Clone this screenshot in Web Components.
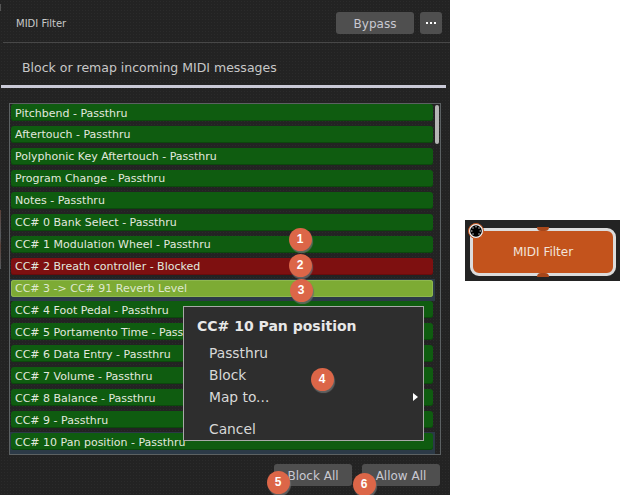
<!DOCTYPE html>
<html><head><meta charset="utf-8">
<style>
html,body{margin:0;padding:0;background:#fff;width:625px;height:495px;overflow:hidden;font-family:"DejaVu Sans",sans-serif}
body{display:flex}
</style></head><body>
<midi-panel></midi-panel>
<midi-node>MIDI Filter</midi-node>
<script>
const TEX="background-color:#232323;background-image:radial-gradient(rgba(255,255,255,.035) 1px,transparent 1px);background-size:3px 3px;";
class El extends HTMLElement{
  constructor(){super();this.attachShadow({mode:'open'}).innerHTML=this.html();}
}
customElements.define('midi-btn',class extends El{html(){return `<style>
:host{display:flex;align-items:center;justify-content:center;height:22px;width:78px;padding-top:1px;background:#4f4f4f;border-radius:3px;color:#c9c9d2;font:12px "DejaVu Sans",sans-serif;box-sizing:border-box}
</style><slot></slot>`}});
customElements.define('midi-row',class extends El{html(){return `<style>
:host{display:flex;align-items:center;box-sizing:border-box;height:17px;margin:0 0 0 1px;padding:1px 0 0 4px;background:#0f5c10;border-radius:3px;box-shadow:inset 0 -1px 0 #0b480c;color:#e2e8df;font:11px "DejaVu Sans",sans-serif;white-space:nowrap;position:relative}
:host([state=blocked]){background:#7e1010;box-shadow:inset 0 -1px 0 #6a0c0c}
:host([state=mapped]){background:#7dab34;box-shadow:inset 0 0 0 1px #8eb84e;color:#dfe8d0}
:host([sel])::before{content:"";position:absolute;z-index:-1;left:-1px;right:-2px;top:-1px;height:22px;background:#2c3a47}
</style><slot></slot>`}});
customElements.define('midi-badge',class extends El{html(){return `<style>
:host{position:absolute;width:23px;height:23px;margin:-11.5px 0 0 -11.5px;border-radius:50%;background:#dc6648;box-shadow:1px 2px 1px rgba(110,110,110,.8);color:#fff;font:bold 12px "Liberation Sans",sans-serif;display:flex;align-items:center;justify-content:center;z-index:5}
</style><slot></slot>`}});
customElements.define('midi-menu',class extends El{html(){return `<style>
:host{position:absolute;left:183px;top:306px;width:241px;height:135px;box-sizing:border-box;border:1px solid #a9a9a9;background:#2e2e2e;color:#d8d8d8;font:13.8px "DejaVu Sans",sans-serif;display:flex;flex-direction:column;z-index:3}
.t{font-weight:bold;font-size:14px;margin:11px 0 0 13px;line-height:16px;color:#e8e8e8}
.i{height:22px;line-height:22px;padding-left:25px;position:relative}
.l{margin-top:8px}
.a{position:absolute;right:5px;top:7px;width:0;height:0;border-left:5px solid #fff;border-top:4px solid transparent;border-bottom:4px solid transparent}
hr{border:0;height:1px;background:#777;margin:4px 4px 6px 4px}
</style><div class="t">CC# 10 Pan position</div><div class="l"></div><div class="i">Passthru</div><div class="i">Block</div><div class="i">Map to...<span class="a"></span></div><hr><div class="i">Cancel</div>`}});
customElements.define('midi-panel',class extends El{html(){
const rows=[["Pitchbend - Passthru"],["Aftertouch - Passthru"],["Polyphonic Key Aftertouch - Passthru"],["Program Change - Passthru"],["Notes - Passthru"],["CC# 0 Bank Select - Passthru"],["CC# 1 Modulation Wheel - Passthru"],["CC# 2 Breath controller - Blocked","blocked"],["CC# 3 -> CC# 91 Reverb Level","mapped",1],["CC# 4 Foot Pedal - Passthru"],["CC# 5 Portamento Time - Passthru"],["CC# 6 Data Entry - Passthru"],["CC# 7 Volume - Passthru"],["CC# 8 Balance - Passthru"],["CC# 9 - Passthru"],["CC# 10 Pan position - Passthru","",1]];
const esc=s=>s.replace(/>/g,'&gt;');
const badges=[[300,239,1],[300,265,2],[301,290,3],[322,379,4],[278,482,5],[364,484,6]];
return `<style>
:host{display:flex;flex-direction:column;flex:none;width:450px;height:495px;position:relative;${TEX}color:#ccc}
header{height:43px;box-sizing:border-box;margin-left:3px;border-bottom:1px solid #484848;display:flex;align-items:flex-start;padding:12px 8px 0 13px;gap:6px}
.name{flex:1;font-size:10px;line-height:23px;color:#c8c8c8}
.more{width:22px;font-weight:bold;letter-spacing:0;padding-top:0}
.dots{display:flex;gap:1.5px}.dots i{width:2.5px;height:2.5px;background:#fff;display:block}
.desc{height:42px;box-sizing:border-box;padding:0 0 0 22px;font-size:12.5px;line-height:49px;color:#c8c8c8;white-space:nowrap}
.rule{height:3px;margin:0 4px 0 1px;background:#c9c9d6;flex:none}
.box{margin:15px 9px 0 9px;height:352px;box-sizing:border-box;border:1px solid #5c6163;padding:0 7px 0 0;position:relative;isolation:isolate;overflow:hidden}
.list{display:flex;flex-direction:column;gap:4.95px}
.sb{position:absolute;right:1px;top:1px;width:4px;height:39px;background:#b5b5b5;border-radius:2px}
footer{display:flex;justify-content:flex-end;gap:10px;margin:9px 10px 0 0}
.e{position:absolute;left:0;width:1px}
</style>
<span class="e" style="top:4px;height:7px;background:#555"></span>
<span class="e" style="top:210px;height:59px;background:linear-gradient(#5a4038,#555a5e 45%,#5a4038 60%,#555a5e)"></span>
<header><div class="name">MIDI Filter</div><midi-btn>Bypass</midi-btn><midi-btn class="more"><span class="dots"><i></i><i></i><i></i></span></midi-btn></header>
<div class="desc">Block or remap incoming MIDI messages</div>
<div class="rule"></div>
<div class="box"><div class="list">${rows.map(r=>`<midi-row ${r[1]?`state="${r[1]}"`:''} ${r[2]?'sel':''}>${esc(r[0])}</midi-row>`).join('')}</div><div class="sb"></div></div>
<footer><midi-btn>Block All</midi-btn><midi-btn>Allow All</midi-btn></footer>
<midi-menu></midi-menu>
${badges.map(b=>`<midi-badge style="left:${b[0]}px;top:${b[1]}px">${b[2]}</midi-badge>`).join('')}`}});
customElements.define('midi-node',class extends El{html(){
let pins='';for(let i=0;i<7;i++){const a=Math.PI*(0.75+i/6*1.5);pins+=`<circle cx="${(8+4.2*Math.cos(a)).toFixed(1)}" cy="${(8+4.2*Math.sin(a)).toFixed(1)}" r=".7" fill="#ddd"/>`}
return `<style>
:host{display:flex;flex:none;width:155px;height:61px;margin:220px 0 0 15px;box-sizing:border-box;padding:8px 4px 5px 5px;background:#232323;position:relative}
.n{flex:1;box-sizing:border-box;border:3.5px solid #dcdcdc;border-radius:9px;background:#c3531c;color:#f2e3da;font:12px "DejaVu Sans",sans-serif;display:flex;align-items:center;justify-content:center;position:relative}
.b{position:absolute;left:50%;margin-left:-6px;width:12px;height:4px;background:#a8471a}
.t{top:-4px;border-radius:0 0 6px 6px}.u{bottom:-4px;border-radius:6px 6px 0 0}
svg{position:absolute;left:3px;top:3px}
</style><div class="n"><span class="b t"></span><slot></slot><span class="b u"></span></div>
<svg width="16" height="16" viewBox="0 0 16 16"><circle cx="8" cy="8" r="7.5" fill="#eee" stroke="#c3531c" stroke-width="1"/><circle cx="8" cy="8" r="5.8" fill="#000"/>${pins}</svg>`}});
</script>
</body></html>
